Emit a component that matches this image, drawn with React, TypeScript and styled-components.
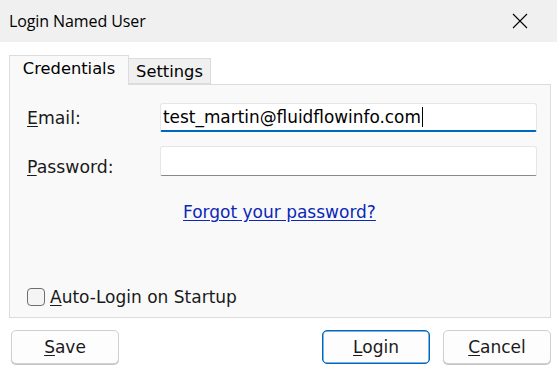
import styled, { createGlobalStyle } from "styled-components";

const Global = createGlobalStyle`
  html, body {
    margin: 0;
    padding: 0;
    background: #ffffff;
  }
  body {
    font-family: "DejaVu Sans", Verdana, sans-serif;
    color: #000;
  }
`;

const Window = styled.div`
  width: 557px;
  height: 381px;
  display: flex;
  flex-direction: column;
  background: #ffffff;
  overflow: hidden;
`;

const TitleBar = styled.div`
  height: 42px;
  flex-shrink: 0;
  display: flex;
  align-items: center;
  justify-content: space-between;
  background: #f0f0f0;
  padding: 0 0 0 9px;
`;

const Title = styled.span`
  font-family: "Open Sans", "Noto Sans", sans-serif;
  font-size: 16px;
  color: #000;
  letter-spacing: -0.1px;
`;

const CloseButton = styled.div`
  width: 46px;
  height: 42px;
  display: flex;
  align-items: center;
  justify-content: flex-start;
  padding-left: 1px;
  box-sizing: border-box;
`;

const Body = styled.div`
  flex: 1;
  display: flex;
  flex-direction: column;
  padding: 13px 6px 0 9px;
`;

const TabRow = styled.div`
  display: flex;
  align-items: flex-end;
  height: 29px;
  position: relative;
  z-index: 1;
`;

const Tab = styled.div<{ $active?: boolean; $width: number }>`
  width: ${(p) => p.$width}px;
  height: ${(p) => (p.$active ? 30 : 26)}px;
  box-sizing: border-box;
  display: flex;
  align-items: ${(p) => (p.$active ? "flex-start" : "center")};
  justify-content: center;
  padding-top: ${(p) => (p.$active ? 3 : 0)}px;
  font-size: 16.3px;
  color: #000;
  white-space: nowrap;
  border: 1px solid #dcdcdc;
  border-bottom: ${(p) => (p.$active ? "none" : "1px solid #dcdcdc")};
  border-left: ${(p) => (p.$active ? "1px solid #dcdcdc" : "none")};
  background: ${(p) => (p.$active ? "#f9f9f9" : "#f0f0f0")};
  margin-bottom: ${(p) => (p.$active ? -1 : 0)}px;
`;

const Panel = styled.div`
  width: 542px;
  height: 234px;
  box-sizing: border-box;
  border: 1px solid #dcdcdc;
  background: #f9f9f9;
  display: flex;
  flex-direction: column;
  padding: 18px 14px 10px 17px;
`;

const FieldRow = styled.div<{ $gap?: number }>`
  display: grid;
  grid-template-columns: 133px 377px;
  align-items: start;
  margin-bottom: ${(p) => p.$gap ?? 0}px;
`;

const Label = styled.label<{ $offset: number }>`
  font-size: 17.3px;
  line-height: 20px;
  color: #1a1a1a;
  padding-top: ${(p) => p.$offset}px;
  white-space: nowrap;
`;

const Mn = styled.span`
  text-decoration: underline;
  text-underline-offset: 2px;
`;

const Input = styled.div<{ $focused?: boolean }>`
  height: ${(p) => (p.$focused ? 29 : 30)}px;
  box-sizing: border-box;
  background: #ffffff;
  border: 1px solid #e6e6e6;
  border-bottom: ${(p) => (p.$focused ? "2px solid #0067c0" : "1px solid #8a8a8a")};
  border-radius: 3px 3px 2px 2px;
  display: flex;
  align-items: center;
  padding: 0 0 0 2px;
  font-size: 16.9px;
  color: #000;
  white-space: nowrap;
`;

const Caret = styled.span`
  display: inline-block;
  width: 1px;
  height: 20px;
  background: #000;
  margin-left: 1px;
`;

const LinkRow = styled.div`
  margin-top: 25px;
  padding-left: 156px;
`;

const ForgotLink = styled.a`
  font-size: 17px;
  color: #0b28b8;
  text-decoration: underline;
  text-underline-offset: 2px;
`;

const CheckRow = styled.div`
  margin-top: auto;
  display: flex;
  align-items: center;
  gap: 5px;
`;

const CheckBox = styled.span`
  width: 18px;
  height: 18px;
  box-sizing: border-box;
  border: 1px solid #6e6e6e;
  border-radius: 4px;
  background: #f4f4f4;
`;

const CheckLabel = styled.span`
  font-size: 17px;
  color: #1a1a1a;
  white-space: nowrap;
`;

const ButtonBar = styled.div`
  display: flex;
  align-items: center;
  margin-top: 12px;
  padding-left: 2px;
  gap: 13px;
`;

const Spacer = styled.div`
  flex: 1;
`;

const Button = styled.button<{ $default?: boolean }>`
  width: 108px;
  height: 34px;
  box-sizing: border-box;
  font-family: "DejaVu Sans", Verdana, sans-serif;
  font-size: 17px;
  color: #1a1a1a;
  background: #fdfdfd;
  border: 1px solid ${(p) => (p.$default ? "#0067c0" : "#d0d0d0")};
  box-shadow: ${(p) => (p.$default ? "inset 0 0 0 0.5px #0067c0" : "0 1px 0 #c4c4c4")};
  border-radius: 5px;
  padding: 0;
`;

function CloseIcon() {
  return (
    <svg width="16" height="16" viewBox="0 0 16 16">
      <path d="M1 1 L15 15 M15 1 L1 15" stroke="#000" strokeWidth="1.1" fill="none" />
    </svg>
  );
}

export default function App() {
  return (
    <>
      <Global />
      <Window>
        <TitleBar>
          <Title>Login Named User</Title>
          <CloseButton>
            <CloseIcon />
          </CloseButton>
        </TitleBar>
        <Body>
          <TabRow>
            <Tab $active $width={120}>Credentials</Tab>
            <Tab $width={82}>Settings</Tab>
          </TabRow>
          <Panel>
            <FieldRow $gap={14}>
              <Label $offset={5}>
                <Mn>E</Mn>mail:
              </Label>
              <Input $focused>
                test_martin@fluidflowinfo.com
                <Caret />
              </Input>
            </FieldRow>
            <FieldRow>
              <Label $offset={11}>
                <Mn>P</Mn>assword:
              </Label>
              <Input />
            </FieldRow>
            <LinkRow>
              <ForgotLink href="#">Forgot your password?</ForgotLink>
            </LinkRow>
            <CheckRow>
              <CheckBox />
              <CheckLabel>
                <Mn>A</Mn>uto-Login on Startup
              </CheckLabel>
            </CheckRow>
          </Panel>
          <ButtonBar>
            <Button>
              <Mn>S</Mn>ave
            </Button>
            <Spacer />
            <Button $default>
              <Mn>L</Mn>ogin
            </Button>
            <Button>
              <Mn>C</Mn>ancel
            </Button>
          </ButtonBar>
        </Body>
      </Window>
    </>
  );
}
